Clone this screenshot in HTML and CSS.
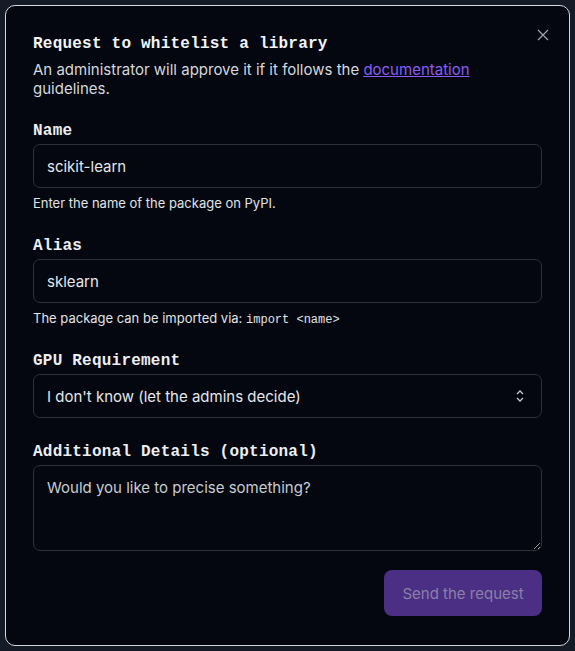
FILE: index.html
```html
<!DOCTYPE html>
<html lang="en">
<head>
<meta charset="utf-8">
<title>Request to whitelist a library</title>
<link rel="stylesheet" href="styles.css">
</head>
<body>
<div class="modal">
  <button class="close" aria-label="Close">
    <svg width="12" height="12" viewBox="0 0 12 12"><path d="M1 1L11 11M11 1L1 11" stroke="#a1a5ad" stroke-width="1.2" fill="none"/></svg>
  </button>
  <h2 class="title">Request to whitelist a library</h2>
  <p class="desc">An administrator will approve it if it follows the <a href="#">documentation</a> guidelines.</p>

  <div class="field">
    <label class="label">Name</label>
    <div class="input">scikit-learn</div>
    <p class="help">Enter the name of the package on PyPI.</p>
  </div>

  <div class="field">
    <label class="label">Alias</label>
    <div class="input">sklearn</div>
    <p class="help">The package can be imported via: <code>import &lt;name&gt;</code></p>
  </div>

  <div class="field">
    <label class="label">GPU Requirement</label>
    <div class="input select">
      <span>I don't know (let the admins decide)</span>
      <svg width="10" height="14" viewBox="0 0 10 14"><path d="M2 5L5 2L8 5M2 9L5 12L8 9" stroke="#c4c8cf" stroke-width="1.3" fill="none"/></svg>
    </div>
  </div>

  <div class="field">
    <label class="label">Additional Details (optional)</label>
    <textarea class="textarea" placeholder="Would you like to precise something?"></textarea>
  </div>

  <div class="actions">
    <button class="submit">Send the request</button>
  </div>
</div>
</body>
</html>
```

FILE: styles.css
```css
html, body {
  margin: 0;
  padding: 0;
  background: #151a27;
}
body {
  padding: 5px;
  font-family: Inter, "Noto Sans", sans-serif;
  color: #e5e7eb;
}
.modal {
  position: relative;
  box-sizing: border-box;
  width: 565px;
  height: 641px;
  background: #04070f;
  border: 1px solid #d6d7da;
  border-radius: 10px;
  padding: 26px 27px 28px 27px;
}
.close {
  position: absolute;
  top: 23px;
  right: 20px;
  background: none;
  border: 0;
  padding: 0;
  width: 12px;
  height: 12px;
  display: flex;
}
.title {
  margin: 0;
  font-family: "Liberation Mono", "DejaVu Sans Mono", monospace;
  font-weight: 700;
  font-size: 16px;
  letter-spacing: 0.22px;
  line-height: 24px;
  color: #f3f4f6;
}
.desc {
  margin: 4px 0 0;
  font-size: 15px;
  line-height: 19px;
  color: #d4d7dd;
}
.desc a {
  color: #8b5cf6;
  text-decoration: underline;
}
.field {
  margin-top: 21px;
  display: flex;
  flex-direction: column;
}
.field + .field {
  margin-top: 22px;
}
.label {
  font-family: "Liberation Mono", "DejaVu Sans Mono", monospace;
  font-weight: 700;
  font-size: 16px;
  letter-spacing: 0.22px;
  line-height: 24px;
  color: #eceef1;
}
.input {
  box-sizing: border-box;
  margin-top: 1px;
  height: 44px;
  border: 1px solid #2b303c;
  border-radius: 7px;
  padding: 0 13px;
  display: flex;
  align-items: center;
  font-size: 15px;
  color: #e5e7eb;
}
.select {
  justify-content: space-between;
  padding-right: 16px;
}
.help {
  margin: 6px 0 0;
  font-size: 13px;
  line-height: 18px;
  color: #e0e3e8;
}
.help code {
  font-family: "Liberation Mono", "DejaVu Sans Mono", monospace;
  font-size: 12px;
  line-height: 1;
}
.textarea {
  box-sizing: border-box;
  margin-top: 1px;
  height: 86px;
  background: transparent;
  border: 1px solid #2b303c;
  border-radius: 7px;
  padding: 12px 13px;
  font-family: Inter, "Noto Sans", sans-serif;
  font-size: 15px;
  color: #e5e7eb;
  resize: vertical;
}
.textarea::placeholder {
  color: #c8ccd3;
}
.actions {
  margin-top: 19px;
  display: flex;
  justify-content: flex-end;
}
.submit {
  height: 46px;
  width: 158px;
  border: 0;
  border-radius: 8px;
  background: #4a2f85;
  color: #8b80a6;
  font-family: Inter, "Noto Sans", sans-serif;
  font-size: 15px;
}
```
